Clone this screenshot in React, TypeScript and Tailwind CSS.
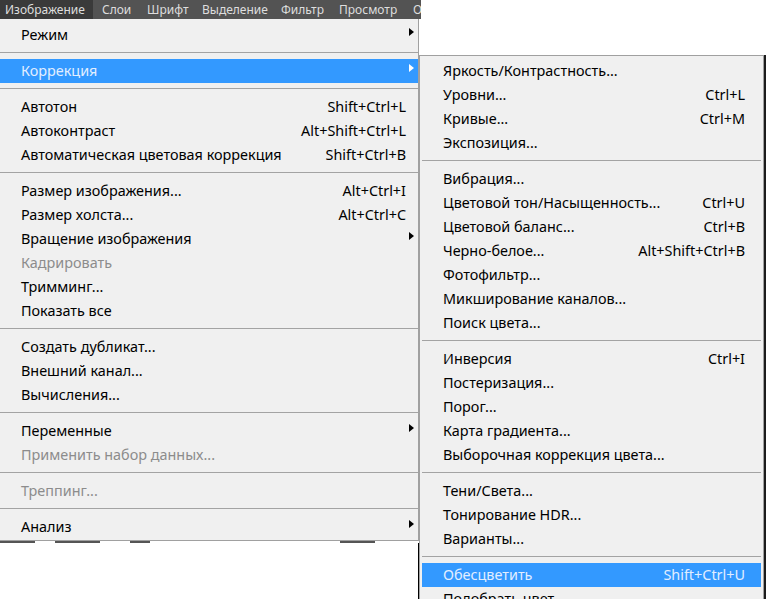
import React from 'react'

type Item = { t: string; k?: string; arrow?: boolean; hl?: boolean; off?: boolean } | 'sep'

const mainMenu: Item[] = [
  { t: 'Режим', arrow: true },
  'sep',
  { t: 'Коррекция', arrow: true, hl: true },
  'sep',
  { t: 'Автотон', k: 'Shift+Ctrl+L' },
  { t: 'Автоконтраст', k: 'Alt+Shift+Ctrl+L' },
  { t: 'Автоматическая цветовая коррекция', k: 'Shift+Ctrl+B' },
  'sep',
  { t: 'Размер изображения...', k: 'Alt+Ctrl+I' },
  { t: 'Размер холста...', k: 'Alt+Ctrl+C' },
  { t: 'Вращение изображения', arrow: true },
  { t: 'Кадрировать', off: true },
  { t: 'Тримминг...' },
  { t: 'Показать все' },
  'sep',
  { t: 'Создать дубликат...' },
  { t: 'Внешний канал...' },
  { t: 'Вычисления...' },
  'sep',
  { t: 'Переменные', arrow: true },
  { t: 'Применить набор данных...', off: true },
  'sep',
  { t: 'Треппинг...', off: true },
  'sep',
  { t: 'Анализ', arrow: true },
]

const subMenu: Item[] = [
  { t: 'Яркость/Контрастность...' },
  { t: 'Уровни...', k: 'Ctrl+L' },
  { t: 'Кривые...', k: 'Ctrl+M' },
  { t: 'Экспозиция...' },
  'sep',
  { t: 'Вибрация...' },
  { t: 'Цветовой тон/Насыщенность...', k: 'Ctrl+U' },
  { t: 'Цветовой баланс...', k: 'Ctrl+B' },
  { t: 'Черно-белое...', k: 'Alt+Shift+Ctrl+B' },
  { t: 'Фотофильтр...' },
  { t: 'Микширование каналов...' },
  { t: 'Поиск цвета...' },
  'sep',
  { t: 'Инверсия', k: 'Ctrl+I' },
  { t: 'Постеризация...' },
  { t: 'Порог...' },
  { t: 'Карта градиента...' },
  { t: 'Выборочная коррекция цвета...' },
  'sep',
  { t: 'Тени/Света...' },
  { t: 'Тонирование HDR...' },
  { t: 'Варианты...' },
  'sep',
  { t: 'Обесцветить', k: 'Shift+Ctrl+U', hl: true },
  { t: 'Подобрать цвет...' },
]

const tabs = [
  { t: 'Изображение', cls: 'w-[93px] pl-[5px] bg-[#3a3a3a]' },
  { t: 'Слои', cls: 'w-[44px] pl-[9px]' },
  { t: 'Шрифт', cls: 'w-[56px] pl-[10px]' },
  { t: 'Выделение', cls: 'w-[79px] pl-[9px]' },
  { t: 'Фильтр', cls: 'w-[58px] pl-[9px]' },
  { t: 'Просмотр', cls: 'w-[74px] pl-[9px]' },
  { t: 'Окно', cls: 'w-[60px] pl-[9px]' },
]

function Row({ item, slot }: { item: Item; slot: 'main' | 'sub' }) {
  if (item === 'sep') {
    return (
      <div className="h-[12px] pt-[5px]">
        <div className="h-px bg-[#a3a3a3]" />
      </div>
    )
  }
  const color = item.hl ? 'bg-[#3399ff] text-[#e2eeff]' : item.off ? 'text-[#8c8c8c]' : 'text-black'
  return (
    <div className={`flex h-6 items-center pl-[21px] whitespace-nowrap ${color}`}>
      <span className="flex-1">{item.t}</span>
      {item.k && <span>{item.k}</span>}
      <span className={`flex h-6 ${slot === 'main' ? 'w-[12px]' : 'w-[16px]'}`}>
        {item.arrow && (
          <span
            className={`ml-[3px] mt-[5px] h-0 w-0 border-y-[4px] border-l-[5px] border-y-transparent ${
              item.hl ? 'border-l-white' : 'border-l-black'
            }`}
          />
        )}
      </span>
    </div>
  )
}

export default function App() {
  return (
    <div className="relative h-[599px] w-[766px] overflow-hidden bg-white font-['Noto_Sans',sans-serif] text-[14.4px]">
      {/* menu bar */}
      <div className="flex h-[19px] w-[421px] overflow-hidden bg-[#535353] text-[12px] leading-[19px] text-[#dedede]">
        {tabs.map((tb) => (
          <div key={tb.t} className={`shrink-0 ${tb.cls}`}>
            {tb.t}
          </div>
        ))}
      </div>

      {/* main dropdown */}
      <div className="w-[419px] border-r border-b border-[#a0a0a0] bg-[#f0f0f0] pt-[4px] pb-[1px]">
        {mainMenu.map((it, i) => (
          <Row key={i} item={it} slot="main" />
        ))}
      </div>
      <div className="flex h-[2px] w-[418px]">
        <div className="w-[35px] bg-[#555]" />
        <div className="w-[20px]" />
        <div className="w-[45px] bg-[#555]" />
        <div className="w-[30px]" />
        <div className="w-[20px] bg-[#555]" />
        <div className="w-[190px]" />
        <div className="w-[35px] bg-[#555]" />
      </div>
      <div className="ml-[418px] h-[60px] w-px bg-black" />

      {/* submenu */}
      <div className="absolute top-[55px] left-[419px] w-[345px] border border-b-0 border-[#a0a0a0] bg-[#f0f0f0] px-[2px] pt-[3px]">
        {subMenu.map((it, i) => (
          <Row key={i} item={it} slot="sub" />
        ))}
      </div>

      {/* dark background at the right edge */}
      <div className="absolute top-[55px] right-0 h-[544px] w-[2px] bg-[#1c1c1c]" />
    </div>
  )
}
